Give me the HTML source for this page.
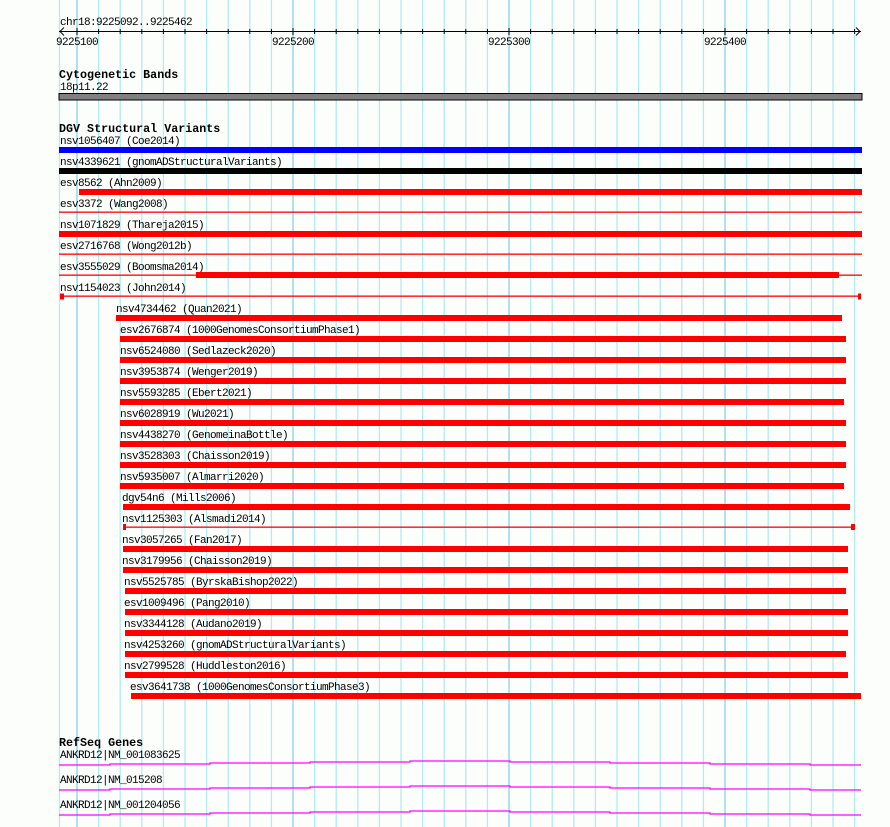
<!DOCTYPE html>
<html><head><meta charset="utf-8"><style>
html,body{margin:0;padding:0;background:#fcfefc;}
svg{display:block;}
text{font-family:"Liberation Mono",monospace;font-size:11px;letter-spacing:-0.6px;fill:#000;}
.t{font-weight:bold;font-size:11.7px;letter-spacing:0;}
</style></head><body>
<svg width="890" height="827" viewBox="0 0 890 827" xmlns="http://www.w3.org/2000/svg">
<rect width="890" height="827" fill="#fcfefc"/>
<g stroke-width="1.3">
<line x1="59.5" y1="0" x2="59.5" y2="827" stroke="#b2ecf0"/>
<line x1="77" y1="0" x2="77" y2="827" stroke="#8ccfe8"/>
<line x1="98.6" y1="0" x2="98.6" y2="827" stroke="#b2ecf0"/>
<line x1="120.2" y1="0" x2="120.2" y2="827" stroke="#b2ecf0"/>
<line x1="141.8" y1="0" x2="141.8" y2="827" stroke="#b2ecf0"/>
<line x1="163.4" y1="0" x2="163.4" y2="827" stroke="#b2ecf0"/>
<line x1="185" y1="0" x2="185" y2="827" stroke="#b2ecf0"/>
<line x1="206.6" y1="0" x2="206.6" y2="827" stroke="#b2ecf0"/>
<line x1="228.2" y1="0" x2="228.2" y2="827" stroke="#b2ecf0"/>
<line x1="249.8" y1="0" x2="249.8" y2="827" stroke="#b2ecf0"/>
<line x1="271.4" y1="0" x2="271.4" y2="827" stroke="#b2ecf0"/>
<line x1="293" y1="0" x2="293" y2="827" stroke="#8ccfe8"/>
<line x1="314.6" y1="0" x2="314.6" y2="827" stroke="#b2ecf0"/>
<line x1="336.2" y1="0" x2="336.2" y2="827" stroke="#b2ecf0"/>
<line x1="357.8" y1="0" x2="357.8" y2="827" stroke="#b2ecf0"/>
<line x1="379.4" y1="0" x2="379.4" y2="827" stroke="#b2ecf0"/>
<line x1="401" y1="0" x2="401" y2="827" stroke="#b2ecf0"/>
<line x1="422.6" y1="0" x2="422.6" y2="827" stroke="#b2ecf0"/>
<line x1="444.2" y1="0" x2="444.2" y2="827" stroke="#b2ecf0"/>
<line x1="465.8" y1="0" x2="465.8" y2="827" stroke="#b2ecf0"/>
<line x1="487.4" y1="0" x2="487.4" y2="827" stroke="#b2ecf0"/>
<line x1="509" y1="0" x2="509" y2="827" stroke="#8ccfe8"/>
<line x1="530.6" y1="0" x2="530.6" y2="827" stroke="#b2ecf0"/>
<line x1="552.2" y1="0" x2="552.2" y2="827" stroke="#b2ecf0"/>
<line x1="573.8" y1="0" x2="573.8" y2="827" stroke="#b2ecf0"/>
<line x1="595.4" y1="0" x2="595.4" y2="827" stroke="#b2ecf0"/>
<line x1="617" y1="0" x2="617" y2="827" stroke="#b2ecf0"/>
<line x1="638.6" y1="0" x2="638.6" y2="827" stroke="#b2ecf0"/>
<line x1="660.2" y1="0" x2="660.2" y2="827" stroke="#b2ecf0"/>
<line x1="681.8" y1="0" x2="681.8" y2="827" stroke="#b2ecf0"/>
<line x1="703.4" y1="0" x2="703.4" y2="827" stroke="#b2ecf0"/>
<line x1="725" y1="0" x2="725" y2="827" stroke="#8ccfe8"/>
<line x1="746.6" y1="0" x2="746.6" y2="827" stroke="#b2ecf0"/>
<line x1="768.2" y1="0" x2="768.2" y2="827" stroke="#b2ecf0"/>
<line x1="789.8" y1="0" x2="789.8" y2="827" stroke="#b2ecf0"/>
<line x1="811.4" y1="0" x2="811.4" y2="827" stroke="#b2ecf0"/>
<line x1="833" y1="0" x2="833" y2="827" stroke="#b2ecf0"/>
<line x1="854.6" y1="0" x2="854.6" y2="827" stroke="#b2ecf0"/>
</g>
<!-- ruler -->
<text x="60" y="25">chr18:9225092..9225462</text>
<g stroke="#000" stroke-width="1" fill="none">
<line x1="59" y1="31.5" x2="861" y2="31.5"/>
<polyline points="64,27.5 60,31.5 64,35.5"/>
<polyline points="856,27.5 860,31.5 856,35.5"/>
</g>
<g stroke="#000" stroke-width="1">
<line x1="77" y1="28" x2="77" y2="35"/><line x1="98.6" y1="29" x2="98.6" y2="34"/><line x1="120.2" y1="29" x2="120.2" y2="34"/><line x1="141.8" y1="29" x2="141.8" y2="34"/><line x1="163.4" y1="29" x2="163.4" y2="34"/><line x1="185" y1="29" x2="185" y2="34"/><line x1="206.6" y1="29" x2="206.6" y2="34"/><line x1="228.2" y1="29" x2="228.2" y2="34"/><line x1="249.8" y1="29" x2="249.8" y2="34"/><line x1="271.4" y1="29" x2="271.4" y2="34"/>
<line x1="293" y1="28" x2="293" y2="35"/><line x1="314.6" y1="29" x2="314.6" y2="34"/><line x1="336.2" y1="29" x2="336.2" y2="34"/><line x1="357.8" y1="29" x2="357.8" y2="34"/><line x1="379.4" y1="29" x2="379.4" y2="34"/><line x1="401" y1="29" x2="401" y2="34"/><line x1="422.6" y1="29" x2="422.6" y2="34"/><line x1="444.2" y1="29" x2="444.2" y2="34"/><line x1="465.8" y1="29" x2="465.8" y2="34"/><line x1="487.4" y1="29" x2="487.4" y2="34"/>
<line x1="509" y1="28" x2="509" y2="35"/><line x1="530.6" y1="29" x2="530.6" y2="34"/><line x1="552.2" y1="29" x2="552.2" y2="34"/><line x1="573.8" y1="29" x2="573.8" y2="34"/><line x1="595.4" y1="29" x2="595.4" y2="34"/><line x1="617" y1="29" x2="617" y2="34"/><line x1="638.6" y1="29" x2="638.6" y2="34"/><line x1="660.2" y1="29" x2="660.2" y2="34"/><line x1="681.8" y1="29" x2="681.8" y2="34"/><line x1="703.4" y1="29" x2="703.4" y2="34"/>
<line x1="725" y1="28" x2="725" y2="35"/><line x1="746.6" y1="29" x2="746.6" y2="34"/><line x1="768.2" y1="29" x2="768.2" y2="34"/><line x1="789.8" y1="29" x2="789.8" y2="34"/><line x1="811.4" y1="29" x2="811.4" y2="34"/><line x1="833" y1="29" x2="833" y2="34"/><line x1="854.6" y1="29" x2="854.6" y2="34"/>
</g>
<text x="56" y="45">9225100</text>
<text x="272" y="45">9225200</text>
<text x="488" y="45">9225300</text>
<text x="704" y="45">9225400</text>

<!-- cytogenetic -->
<text class="t" x="59" y="78">Cytogenetic Bands</text>
<text x="60" y="90">18p11.22</text>
<rect x="59" y="93.5" width="803" height="6.5" fill="#808080" stroke="#000" stroke-width="1"/>

<!-- DGV -->
<text class="t" x="59" y="132">DGV Structural Variants</text>
<text x="60" y="144">nsv1056407 (Coe2014)</text>
<rect x="59" y="147" width="803" height="6" fill="#0000ff"/>
<text x="60" y="165">nsv4339621 (gnomADStructuralVariants)</text>
<rect x="59" y="168" width="803" height="6" fill="#000"/>
<text x="60" y="186">esv8562 (Ahn2009)</text>
<rect x="79" y="189" width="783" height="6" fill="#ff0000"/>
<text x="60" y="207">esv3372 (Wang2008)</text>
<rect x="59" y="211.5" width="803" height="1.3" fill="#ff0000"/>
<text x="60" y="228">nsv1071829 (Thareja2015)</text>
<rect x="59" y="231" width="803" height="6" fill="#ff0000"/>
<text x="60" y="249">esv2716768 (Wong2012b)</text>
<rect x="59" y="253.5" width="803" height="1.3" fill="#ff0000"/>
<text x="60" y="270">esv3555029 (Boomsma2014)</text>
<rect x="59" y="274.5" width="803" height="1.3" fill="#ff0000"/>
<rect x="196" y="272" width="643" height="6" fill="#ff0000"/>
<text x="60" y="291">nsv1154023 (John2014)</text>
<rect x="61" y="295.5" width="799" height="1.3" fill="#ff0000"/>
<rect x="60" y="293.5" width="4" height="6" fill="#ff0000"/>
<rect x="858" y="293.5" width="3" height="6" fill="#ff0000"/>

<g fill="#ff0000">
<rect x="116" y="315" width="726" height="6"/>
<rect x="120" y="336" width="726" height="6"/>
<rect x="120" y="357" width="726" height="6"/>
<rect x="120" y="378" width="726" height="6"/>
<rect x="120" y="399" width="724" height="6"/>
<rect x="120" y="420" width="726" height="6"/>
<rect x="120" y="441" width="726" height="6"/>
<rect x="120" y="462" width="726" height="6"/>
<rect x="120" y="483" width="724" height="6"/>
<rect x="123" y="504" width="727" height="6"/>
<rect x="123" y="526.5" width="729" height="1.3"/>
<rect x="123" y="524" width="3" height="6"/>
<rect x="851" y="524" width="4" height="6"/>
<rect x="123" y="546" width="725" height="6"/>
<rect x="123" y="567" width="725" height="6"/>
<rect x="125" y="588" width="721" height="6"/>
<rect x="125" y="609" width="723" height="6"/>
<rect x="125" y="630" width="723" height="6"/>
<rect x="125" y="651" width="721" height="6"/>
<rect x="125" y="672" width="723" height="6"/>
<rect x="131" y="693" width="730" height="6"/>
</g>
<text x="116" y="312">nsv4734462 (Quan2021)</text>
<text x="120" y="333">esv2676874 (1000GenomesConsortiumPhase1)</text>
<text x="120" y="354">nsv6524080 (Sedlazeck2020)</text>
<text x="120" y="375">nsv3953874 (Wenger2019)</text>
<text x="120" y="396">nsv5593285 (Ebert2021)</text>
<text x="120" y="417">nsv6028919 (Wu2021)</text>
<text x="120" y="438">nsv4438270 (GenomeinaBottle)</text>
<text x="120" y="459">nsv3528303 (Chaisson2019)</text>
<text x="120" y="480">nsv5935007 (Almarri2020)</text>
<text x="122" y="501">dgv54n6 (Mills2006)</text>
<text x="122" y="522">nsv1125303 (Alsmadi2014)</text>
<text x="122" y="543">nsv3057265 (Fan2017)</text>
<text x="122" y="564">nsv3179956 (Chaisson2019)</text>
<text x="124" y="585">nsv5525785 (ByrskaBishop2022)</text>
<text x="124" y="606">esv1009496 (Pang2010)</text>
<text x="124" y="627">nsv3344128 (Audano2019)</text>
<text x="124" y="648">nsv4253260 (gnomADStructuralVariants)</text>
<text x="124" y="669">nsv2799528 (Huddleston2016)</text>
<text x="130" y="690">esv3641738 (1000GenomesConsortiumPhase3)</text>

<!-- RefSeq -->
<text class="t" x="59" y="746">RefSeq Genes</text>
<text x="60" y="758">ANKRD12|NM_001083625</text>
<text x="60" y="783">ANKRD12|NM_015208</text>
<text x="60" y="808">ANKRD12|NM_001204056</text>
<g stroke="#ff00ff" stroke-width="1.2" fill="none">
<polyline points="59,765 110,765 110,764 210,764 210,763 310,763 310,762 410,762 410,761 510,761 510,762 610,762 610,763 710,763 710,764 810,764 810,765 861,765"/>
<polyline points="59,790 110,790 110,789 210,789 210,788 310,788 310,787 410,787 410,786 510,786 510,787 610,787 610,788 710,788 710,789 810,789 810,790 861,790"/>
<polyline points="59,815 110,815 110,814 210,814 210,813 310,813 310,812 410,812 410,811 510,811 510,812 610,812 610,813 710,813 710,814 810,814 810,815 861,815"/>
</g>
</svg>
</body></html>
